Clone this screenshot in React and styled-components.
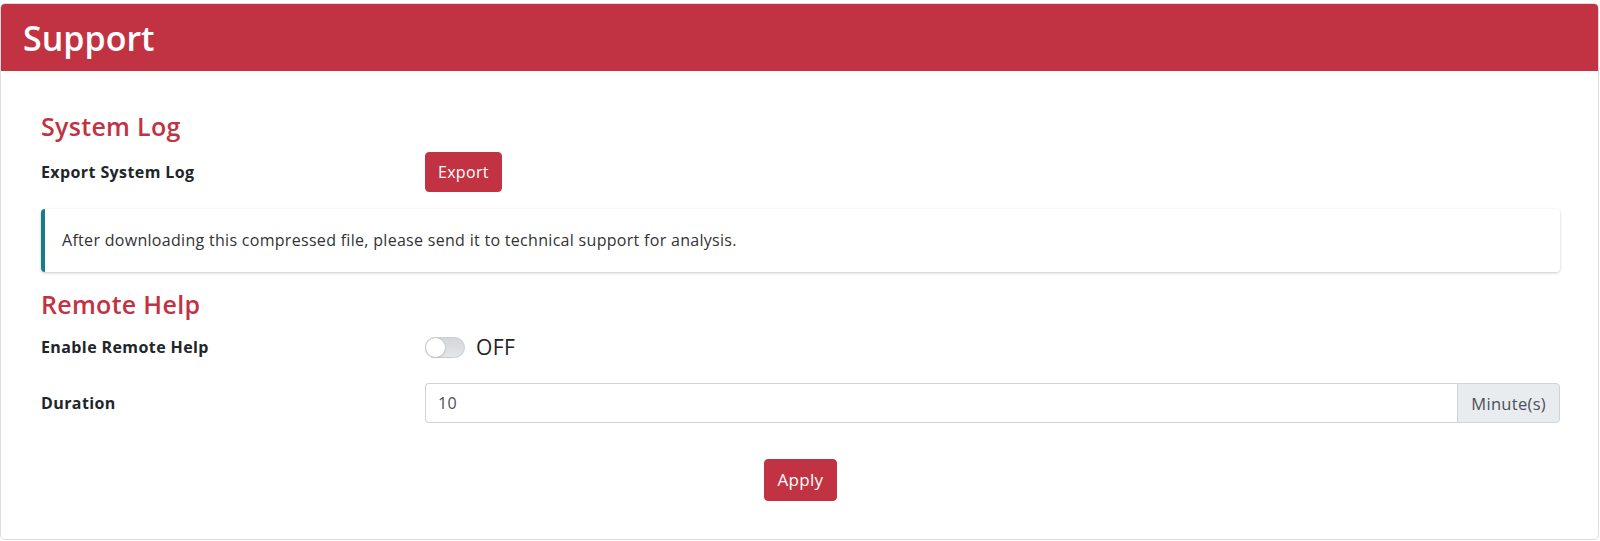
import React, { useState } from "react"
import styled, { createGlobalStyle } from "styled-components"

const GlobalStyle = createGlobalStyle`
  * {
    box-sizing: border-box;
  }
  body {
    margin: 0;
    background: #fff;
    font-family: "Open Sans", "Noto Sans", "Liberation Sans", sans-serif;
    color: #212529;
  }
`

const Page = styled.div`
  padding: 3px 1px 0 0;
`

const Card = styled.section`
  border: 1px solid #dcdcdc;
  border-radius: 5px;
  overflow: hidden;
  background: #fff;
`

const CardHeader = styled.header`
  background: #c13342;
  height: 67px;
  display: flex;
  align-items: center;
  padding: 0 22px;

  h2 {
    margin: 0;
    color: #fff;
    font-size: 34px;
    font-weight: 600;
    letter-spacing: 0;
  }
`

const CardBody = styled.div`
  padding: 41px 38px 38px 40px;
`

const SectionTitle = styled.h3`
  margin: 0 0 ${(p) => p.$gap || 11}px;
  color: #c13342;
  font-size: 25px;
  line-height: 29px;
  font-weight: 600;
  letter-spacing: 0.3px;
`

const Row = styled.div`
  display: grid;
  grid-template-columns: 384px 1fr;
  align-items: center;
  min-height: ${(p) => p.$height || 40}px;
  margin-bottom: ${(p) => p.$gap || 16}px;
`

const Label = styled.label`
  font-size: 16px;
  font-weight: 700;
  letter-spacing: 0.4px;
  color: #212529;
`

const Button = styled.button`
  background: #c13342;
  color: #fff;
  border: 1px solid #c13342;
  border-radius: 4px;
  font-family: inherit;
  font-size: ${(p) => p.$size || 16}px;
  letter-spacing: 0.3px;
  line-height: 24px;
  padding: ${(p) => p.$size ? "8px 13px" : "7px 12px"};
  cursor: pointer;
`

const Alert = styled.div`
  border-left: 4px solid #177e88;
  border-radius: 4px;
  box-shadow: 0 1px 3px rgba(0, 0, 0, 0.22);
  padding: 19px 17px 20px;
  font-size: 16px;
  letter-spacing: 0.3px;
  line-height: 24px;
  color: #333;
  margin-bottom: 18px;
`

const Switch = styled.button`
  display: flex;
  align-items: center;
  gap: 11px;
  background: none;
  border: 0;
  padding: 0;
  cursor: pointer;
  font-family: inherit;
  font-size: 21px;
  letter-spacing: 0.4px;
  color: #222;
`

const Track = styled.span`
  position: relative;
  width: 40px;
  height: 21px;
  border-radius: 11px;
  background: ${(p) => p.$on ? "#c13342" : "linear-gradient(#d3d6da, #e4e6e9)"};
  border: 1px solid #c9cdd1;

  &::after {
    content: "";
    position: absolute;
    top: 0;
    left: ${(p) => p.$on ? "19px" : "0"};
    width: 19px;
    height: 19px;
    border-radius: 50%;
    background: #fff;
    box-shadow: 0 0 0 1px #c6cace, 0 1px 2px rgba(0, 0, 0, 0.15);
  }
`

const InputGroup = styled.div`
  display: flex;
  height: 40px;
`

const Input = styled.input`
  flex: 1;
  min-width: 0;
  border: 1px solid #ced4da;
  border-right: 0;
  border-radius: 4px 0 0 4px;
  padding: 0 12px;
  font-family: inherit;
  font-size: 16px;
  letter-spacing: 0.3px;
  color: #495057;
  outline: none;
`

const Addon = styled.span`
  display: flex;
  align-items: center;
  padding: 0 13px;
  background: #e9ecef;
  border: 1px solid #ced4da;
  border-radius: 0 4px 4px 0;
  font-size: 16.5px;
  letter-spacing: 0.3px;
  color: #495057;
`

const Footer = styled.div`
  display: flex;
  justify-content: center;
  padding-top: 20px;
`

const App = () => {
  const [remote, setRemote] = useState(false)

  return (
    <Page>
      <GlobalStyle />
      <Card>
        <CardHeader>
          <h2>Support</h2>
        </CardHeader>
        <CardBody>
          <SectionTitle>System Log</SectionTitle>
          <Row $gap={17}>
            <Label>Export System Log</Label>
            <div>
              <Button type='button'>Export</Button>
            </div>
          </Row>
          <Alert>
            After downloading this compressed file, please send it to technical
            support for analysis.
          </Alert>

          <SectionTitle $gap={8}>Remote Help</SectionTitle>
          <Row>
            <Label>Enable Remote Help</Label>
            <Switch type='button' onClick={() => setRemote(!remote)}>
              <Track $on={remote} />
              {remote ? "ON" : "OFF"}
            </Switch>
          </Row>
          <Row $gap={0}>
            <Label>Duration</Label>
            <InputGroup>
              <Input defaultValue='10' />
              <Addon>Minute(s)</Addon>
            </InputGroup>
          </Row>

          <Footer>
            <Button type='button' $size={17}>Apply</Button>
          </Footer>
        </CardBody>
      </Card>
    </Page>
  )
}

export default App
